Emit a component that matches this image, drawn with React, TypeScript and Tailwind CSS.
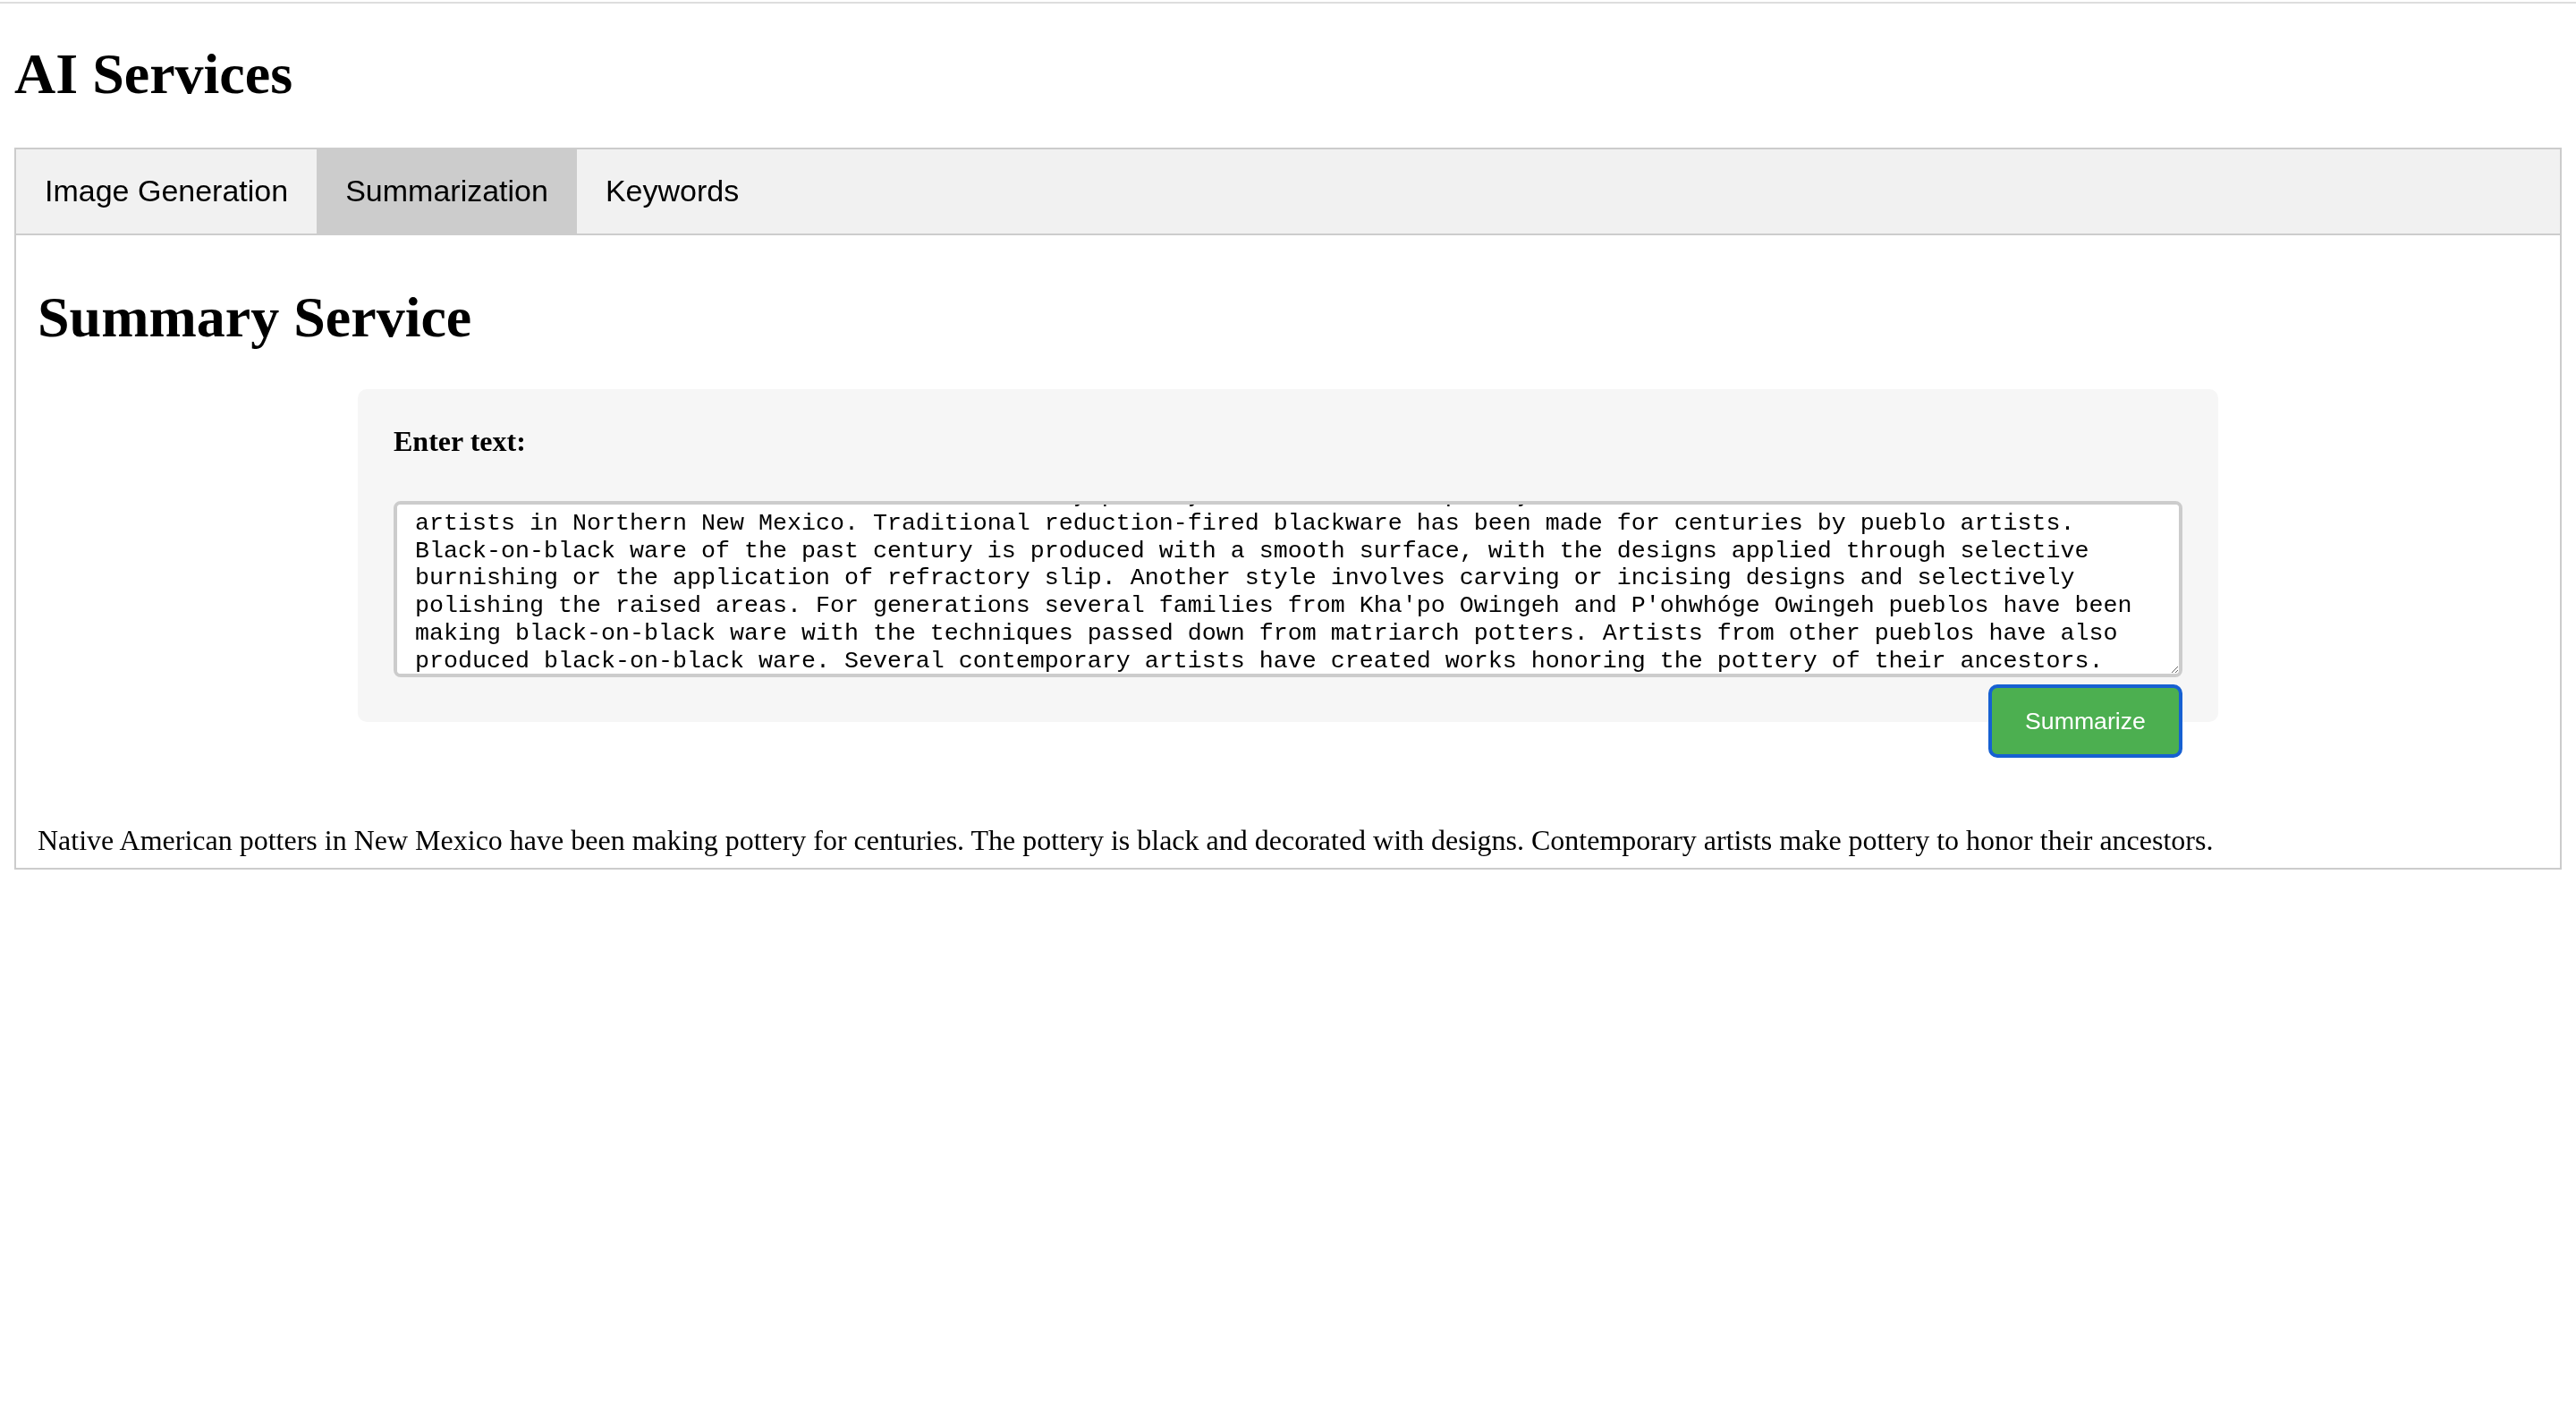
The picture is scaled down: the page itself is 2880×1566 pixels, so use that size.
import { useLayoutEffect, useRef, useState } from 'react'

const SOURCE_TEXT =
  "Black-on-black ware is a 20th- and 21st-century pottery tradition developed by the Puebloan Native American ceramic artists in Northern New Mexico. Traditional reduction-fired blackware has been made for centuries by pueblo artists. Black-on-black ware of the past century is produced with a smooth surface, with the designs applied through selective burnishing or the application of refractory slip. Another style involves carving or incising designs and selectively polishing the raised areas. For generations several families from Kha'po Owingeh and P'ohwhóge Owingeh pueblos have been making black-on-black ware with the techniques passed down from matriarch potters. Artists from other pueblos have also produced black-on-black ware. Several contemporary artists have created works honoring the pottery of their ancestors."

const SUMMARY =
  'Native American potters in New Mexico have been making pottery for centuries. The pottery is black and decorated with designs. Contemporary artists make pottery to honor their ancestors.'

const TABS = ['Image Generation', 'Summarization', 'Keywords']

function SummaryService() {
  const areaRef = useRef<HTMLTextAreaElement>(null)

  // the textarea is shown scrolled down near its last line
  useLayoutEffect(() => {
    const el = areaRef.current
    if (el) el.scrollTop = el.scrollHeight - el.clientHeight - 2
  }, [])

  return (
    <div className="border-2 border-t-0 border-[#cccccc] px-6 py-3">
      <h1 className="mt-[43px] mb-[43px] text-[64px] leading-[74px] font-bold">
        Summary Service
      </h1>

      <div className="mx-auto max-w-[2080px] rounded-[10px] bg-[#f6f6f6] p-10">
        <label
          htmlFor="summary-input"
          className="block text-[32px] leading-[37px] font-bold"
        >
          Enter text:
        </label>
        <textarea
          id="summary-input"
          ref={areaRef}
          defaultValue={SOURCE_TEXT}
          className="mt-[48px] mb-[10px] block h-[197px] w-full resize rounded-[8px] border-4 border-[#cccccc] bg-white px-5 py-0 font-['Liberation_Mono',monospace] text-[26.67px] leading-[30.8px] text-black [scrollbar-width:none] focus:outline-none"
        />
        <button className="float-right -mt-[2px] h-[82px] w-[217px] rounded-[10px] border-4 border-[#1660d2] bg-[#4caf50] font-['Liberation_Sans',Arial,sans-serif] text-[26.67px] text-white">
          Summarize
        </button>
      </div>

      <div className="mt-[114px] text-[32px] leading-[37px]">{SUMMARY}</div>
    </div>
  )
}

export default function App() {
  const [active, setActive] = useState('Summarization')

  return (
    <div className="min-h-screen bg-white font-['Liberation_Serif','Times_New_Roman',serif] text-black">
      <div className="mt-[2px] h-[2px] bg-[#dddddd]" />
      <div className="px-4">
        <h1 className="mt-[42px] mb-[45px] text-[64px] leading-[74px] font-bold">
          AI Services
        </h1>

        <div className="flex border-2 border-[#cccccc] bg-[#f1f1f1]">
          {TABS.map((tab) => (
            <button
              key={tab}
              onClick={() => setActive(tab)}
              className={
                tab === active
                  ? 'h-[94px] bg-[#cccccc] px-8 pb-[2px] font-[Liberation_Sans,Arial,sans-serif] text-[34px] text-black'
                  : 'h-[94px] px-8 pb-[2px] font-[Liberation_Sans,Arial,sans-serif] text-[34px] text-black hover:bg-[#dddddd]'
              }
            >
              {tab}
            </button>
          ))}
        </div>

        <SummaryService />
      </div>
    </div>
  )
}
